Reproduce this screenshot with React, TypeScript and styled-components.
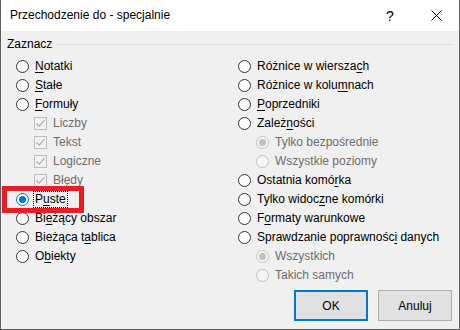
import React from "react";
import styled, { createGlobalStyle, css } from "styled-components";

const Global = createGlobalStyle`
  html, body { margin: 0; padding: 0; background: #ffffff; }
  body { font-family: "Liberation Sans", Arial, sans-serif; }
  * { box-sizing: border-box; }
`;

const FONT = `"Liberation Sans", Arial, sans-serif`;

const Dialog = styled.div`
  width: 460px;
  height: 330px;
  display: flex;
  flex-direction: column;
  background: #f0f0f0;
  border: 1px solid #5f5f5f;
  border-top: none;
  font-family: ${FONT};
  font-size: 12px;
  color: #000;
  position: relative;
`;

const TitleBar = styled.div`
  height: 31px;
  flex: none;
  display: flex;
  align-items: center;
  background: #ffffff;
`;

const Title = styled.div`
  flex: 1;
  padding-left: 9px;
  font-size: 12px;
  color: #000;
  padding-bottom: 1px;
`;

const TitleButton = styled.div`
  width: 46px;
  height: 31px;
  display: flex;
  align-items: center;
  justify-content: center;
  font-size: 14px;
  color: #000;
`;

const Body = styled.div`
  flex: 1;
  display: flex;
  flex-direction: column;
  padding: 5px 7px 0 6px;
`;

const GroupHeader = styled.div`
  height: 16px;
  display: flex;
  align-items: center;
  gap: 4px;
`;

const GroupLabel = styled.span`
  line-height: 16px;
`;

const GroupLine = styled.div`
  flex: 1;
  height: 1px;
  background: #dcdcdc;
`;

const Columns = styled.div`
  display: grid;
  grid-template-columns: 222px 1fr;
  margin-top: 5px;
  padding-left: 9px;
`;

const Column = styled.div`
  display: flex;
  flex-direction: column;
`;

const Row = styled.div<{ $indent?: boolean; $disabled?: boolean }>`
  height: 19px;
  display: flex;
  align-items: center;
  gap: 5px;
  padding-left: ${(p) => (p.$indent ? "18px" : "0")};
  color: ${(p) => (p.$disabled ? "#6d6d6d" : "#000")};
  white-space: nowrap;
`;

const Radio = styled.span<{ $checked?: boolean; $disabled?: boolean }>`
  width: 13px;
  height: 13px;
  flex: none;
  border-radius: 50%;
  border: 1px solid #333333;
  background: #ffffff;
  display: flex;
  align-items: center;
  justify-content: center;
  ${(p) =>
    p.$disabled &&
    css`
      border-color: #c2c2c2;
      background: #f5f5f5;
    `}
  ${(p) =>
    p.$checked &&
    !p.$disabled &&
    css`
      border-color: #0078d7;
    `}
  &::after {
    content: "";
    width: 7px;
    height: 7px;
    border-radius: 50%;
    display: ${(p) => (p.$checked ? "block" : "none")};
    background: ${(p) => (p.$disabled ? "#c2c2c2" : "#0078d7")};
  }
`;

const CheckBox = styled.span`
  width: 13px;
  height: 13px;
  flex: none;
  border: 1px solid #bcbcbc;
  background: #f2f2f2;
  display: flex;
  align-items: center;
  justify-content: center;
`;

const Label = styled.span<{ $focus?: boolean }>`
  line-height: 15px;
  padding: 0 1px;
  margin-left: -1px;
  border: 1px solid transparent;
  ${(p) =>
    p.$focus &&
    css`
      border: 1px dotted #000;
    `}
  u {
    text-decoration: underline;
    text-underline-offset: 2px;
  }
`;

const Footer = styled.div`
  display: flex;
  justify-content: flex-end;
  gap: 10px;
  margin-top: 5px;
`;

const Button = styled.button<{ $default?: boolean }>`
  width: 74px;
  height: 31px;
  font-family: ${FONT};
  font-size: 12px;
  color: #000;
  background: #e1e1e1;
  border: 1px solid #adadad;
  padding: 0;
  ${(p) =>
    p.$default &&
    css`
      border: 2px solid #0078d7;
    `}
`;

const Highlight = styled.div`
  position: absolute;
  left: 1px;
  top: 186px;
  width: 82px;
  height: 27px;
  border: 5px solid #ed1c24;
  pointer-events: none;
`;

const Check = () => (
  <svg width="11" height="11" viewBox="0 0 11 11">
    <path d="M1.5 5.5 L4.2 8.2 L9.5 2.2" fill="none" stroke="#a8a8a8" strokeWidth="1.1" />
  </svg>
);

type Item = {
  kind: "radio" | "check";
  label: React.ReactNode;
  indent?: boolean;
  disabled?: boolean;
  checked?: boolean;
  focus?: boolean;
};

const left: Item[] = [
  { kind: "radio", label: <><u>N</u>otatki</> },
  { kind: "radio", label: <><u>S</u>tałe</> },
  { kind: "radio", label: <><u>F</u>ormuły</> },
  { kind: "check", label: "Liczby", indent: true, disabled: true, checked: true },
  { kind: "check", label: "Tekst", indent: true, disabled: true, checked: true },
  { kind: "check", label: "Logiczne", indent: true, disabled: true, checked: true },
  { kind: "check", label: "Błędy", indent: true, disabled: true, checked: true },
  { kind: "radio", label: <>P<u>u</u>ste</>, checked: true, focus: true },
  { kind: "radio", label: <>Bi<u>e</u>żący obszar</> },
  { kind: "radio", label: <>Bieżąca t<u>a</u>blica</> },
  { kind: "radio", label: <>O<u>b</u>iekty</> },
];

const right: Item[] = [
  { kind: "radio", label: <>Różnice w wiersza<u>c</u>h</> },
  { kind: "radio", label: <>Różnice w kolu<u>m</u>nach</> },
  { kind: "radio", label: <><u>P</u>oprzedniki</> },
  { kind: "radio", label: <>Zależ<u>n</u>ości</> },
  { kind: "radio", label: "Tylko bezpośrednie", indent: true, disabled: true, checked: true },
  { kind: "radio", label: "Wszystkie poziomy", indent: true, disabled: true },
  { kind: "radio", label: <>Ostatnia komó<u>r</u>ka</> },
  { kind: "radio", label: <>Tylko widoc<u>z</u>ne komórki</> },
  { kind: "radio", label: <>F<u>o</u>rmaty warunkowe</> },
  { kind: "radio", label: <>Sprawdzanie poprawnośc<u>i</u> danych</> },
  { kind: "radio", label: "Wszystkich", indent: true, disabled: true, checked: true },
  { kind: "radio", label: "Takich samych", indent: true, disabled: true },
];

const renderItem = (it: Item, i: number) => (
  <Row key={i} $indent={it.indent} $disabled={it.disabled}>
    {it.kind === "radio" ? (
      <Radio $checked={it.checked} $disabled={it.disabled} />
    ) : (
      <CheckBox>{it.checked && <Check />}</CheckBox>
    )}
    <Label $focus={it.focus}>{it.label}</Label>
  </Row>
);

export default function App() {
  return (
    <>
      <Global />
      <Dialog>
        <TitleBar>
          <Title>Przechodzenie do - specjalnie</Title>
          <TitleButton>?</TitleButton>
          <TitleButton>
            <svg width="11" height="11" viewBox="0 0 11 11">
              <path d="M0.5 0.5 L10.5 10.5 M10.5 0.5 L0.5 10.5" stroke="#000" strokeWidth="1" fill="none" />
            </svg>
          </TitleButton>
        </TitleBar>
        <Body>
          <GroupHeader>
            <GroupLabel>Zaznacz</GroupLabel>
            <GroupLine />
          </GroupHeader>
          <Columns>
            <Column>{left.map(renderItem)}</Column>
            <Column>{right.map(renderItem)}</Column>
          </Columns>
          <Footer>
            <Button $default>OK</Button>
            <Button>Anuluj</Button>
          </Footer>
        </Body>
        <Highlight />
      </Dialog>
    </>
  );
}
